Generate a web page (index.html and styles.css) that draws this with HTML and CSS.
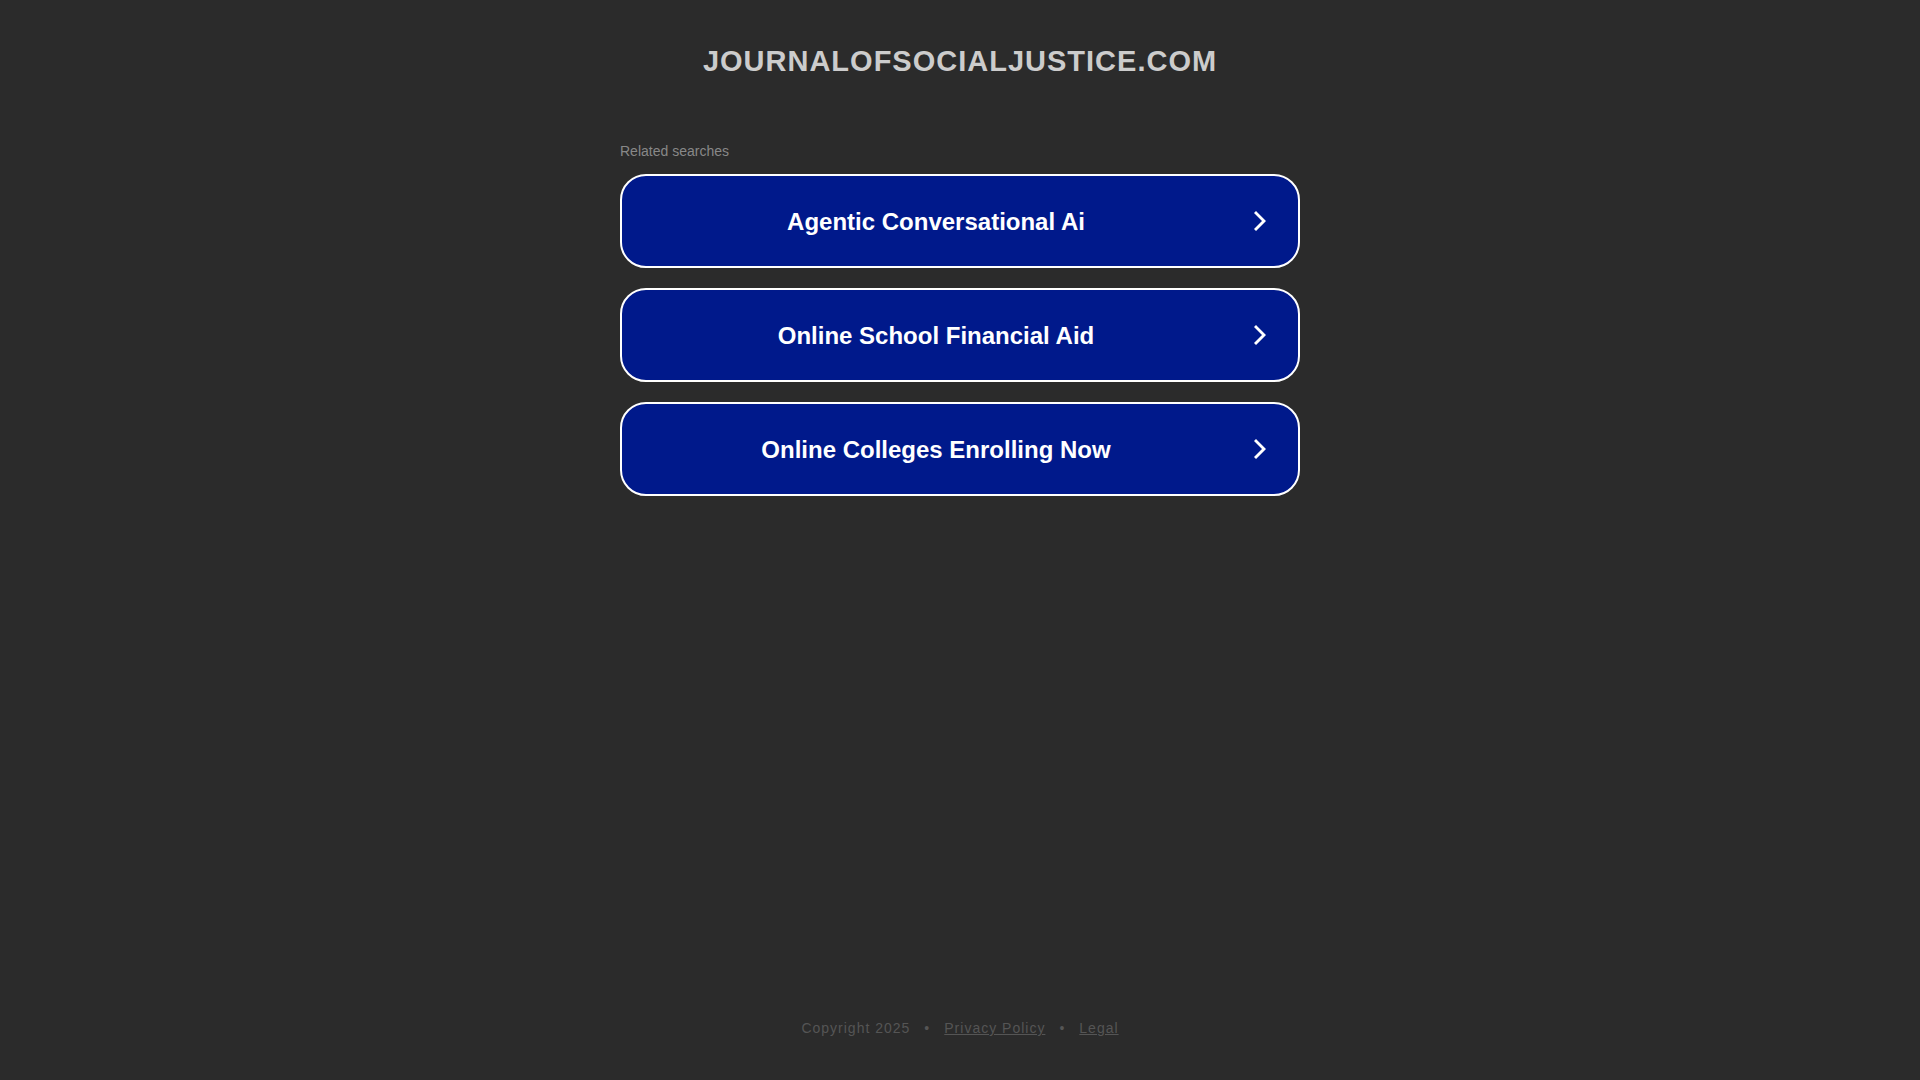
FILE: index.html
```html
<!DOCTYPE html>
<html lang="en">
<head>
<meta charset="utf-8">
<title>journalofsocialjustice.com</title>
<meta name="viewport" content="width=device-width, initial-scale=1">
<link rel="stylesheet" href="styles.css">
</head>
<body>
<header class="header"><h1 class="domain">journalofsocialjustice.com</h1></header>
<main class="searches">
  <h2 class="searches-title">Related searches</h2>
  <nav class="search-list" aria-label="Related searches">
    <a class="search-link" href="#"><span class="search-text">Agentic Conversational Ai</span><svg class="chevron" viewBox="0 0 40 40" aria-hidden="true"><path d="M14 12l2-2 10 10-10 10-2-2 8-8z"/></svg></a>
    <a class="search-link" href="#"><span class="search-text">Online School Financial Aid</span><svg class="chevron" viewBox="0 0 40 40" aria-hidden="true"><path d="M14 12l2-2 10 10-10 10-2-2 8-8z"/></svg></a>
    <a class="search-link" href="#"><span class="search-text">Online Colleges Enrolling Now</span><svg class="chevron" viewBox="0 0 40 40" aria-hidden="true"><path d="M14 12l2-2 10 10-10 10-2-2 8-8z"/></svg></a>
  </nav>
</main>
<footer class="footer">
  <span>Copyright 2025</span><span>•</span><a class="footer-link" href="#">Privacy Policy</a><span>•</span><a class="footer-link" href="#">Legal</a>
</footer>
</body>
</html>
```
FILE: styles.css
```css
* { box-sizing: border-box; }
body {
  margin: 0;
  min-height: 100vh;
  display: flex;
  flex-direction: column;
  background: #2b2b2b;
  font-family: "Liberation Sans", Arial, sans-serif;
}
.header { padding: 44px 20px; text-align: center; }
.domain {
  margin: 0;
  color: #ccc;
  font-size: 29px;
  line-height: 34px;
  letter-spacing: 1px;
  text-transform: uppercase;
}
.searches { width: 100%; max-width: 680px; margin: 0 auto; padding-top: 20px; }
.searches-title {
  margin: 0 0 14px;
  color: #888;
  font-size: 14px;
  font-weight: 400;
  line-height: 18px;
}
.search-list { display: flex; flex-direction: column; gap: 20px; }
.search-link {
  display: flex;
  align-items: center;
  min-height: 94px;
  padding: 20px 18px 20px 10px;
  border: 2px solid #fff;
  border-radius: 26px;
  background: #00198b;
  color: #fff;
  font-size: 24px;
  font-weight: 700;
  line-height: 30px;
  text-align: center;
  text-decoration: none;
}
.search-text { flex: 1; padding-top: 2px; }
.chevron { width: 40px; height: 40px; fill: currentColor; }
.footer {
  display: flex;
  justify-content: center;
  gap: 14px;
  margin-top: auto;
  padding: 20px 20px 43px;
  color: #555;
  font-size: 14px;
  line-height: 18px;
  letter-spacing: 1px;
}
.footer-link { color: inherit; }
```
